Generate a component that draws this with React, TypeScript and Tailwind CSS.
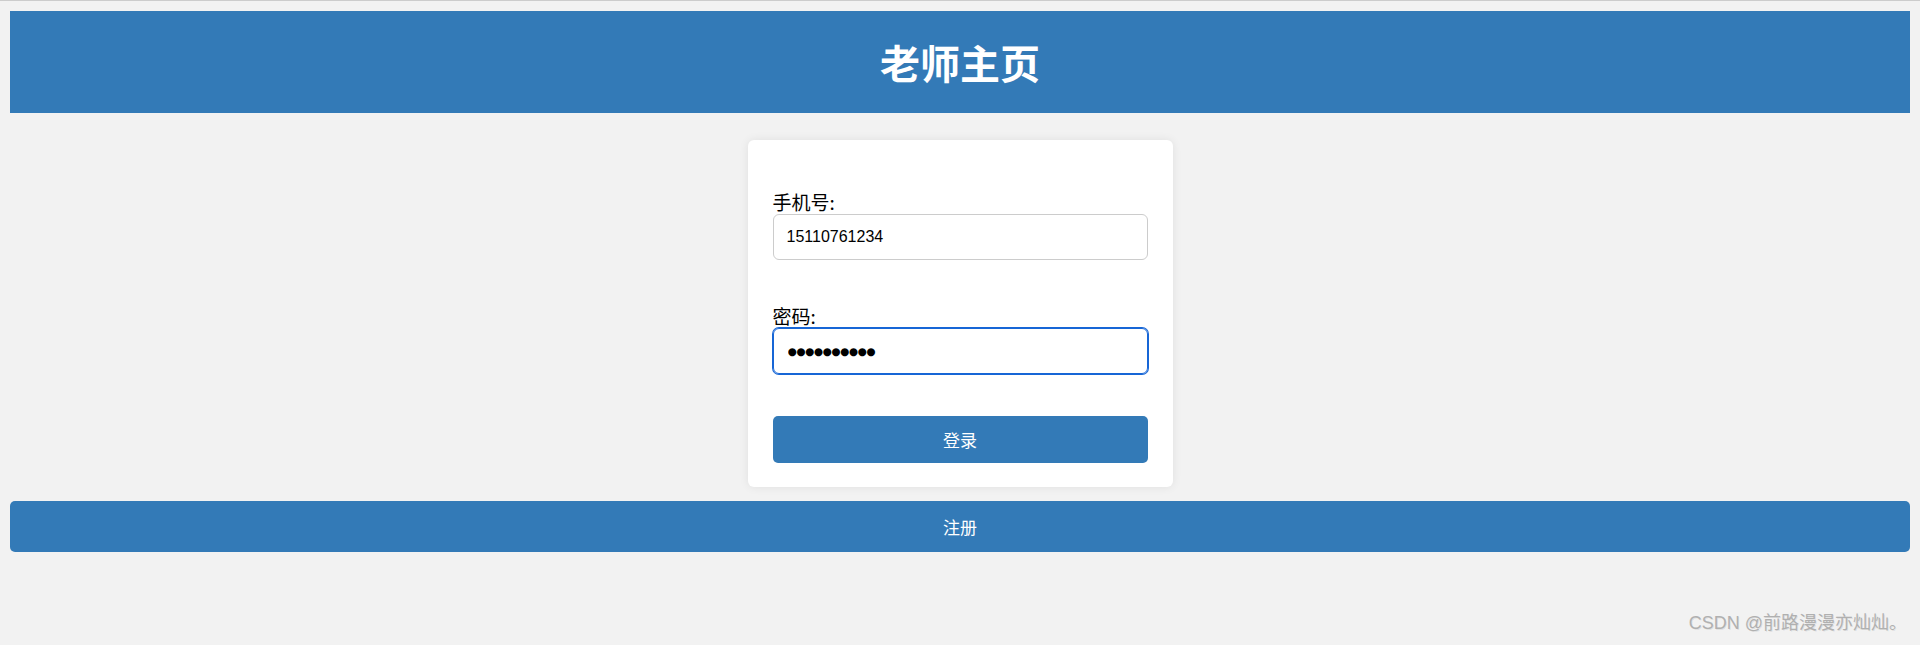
import React from 'react';

// Página de login del profesor: cabecera azul, tarjeta con formulario y botón de registro
const App: React.FC = () => {
  return (
    <div className="relative min-h-screen bg-[#f2f2f2] border-t border-[#cccccc] p-[10px] font-['Microsoft_YaHei','Noto_Sans_CJK_SC',sans-serif] text-black">
      <header className="h-[102px] bg-[#337ab7] flex items-center justify-center">
        <h1 className="text-[40px] font-bold text-white leading-none">老师主页</h1>
      </header>

      <div className="flex justify-center mt-[27px]">
        <form className="w-[425px] bg-white rounded-[6px] shadow-[0_0_10px_rgba(0,0,0,0.08)] px-[25px] pt-[50px] pb-[24px] flex flex-col">
          <label className="text-[19px] leading-[24px]">手机号:</label>
          <input
            type="text"
            readOnly
            value="15110761234"
            className="h-[46px] w-full border border-[#cccccc] rounded-[6px] px-[13px] text-[16px] font-['Liberation_Sans',sans-serif] text-black outline-none"
          />

          <label className="text-[19px] leading-[24px] mt-[44px]">密码:</label>
          {/* Campo enfocado con puntos grandes como en Windows */}
          <input
            type="text"
            readOnly
            value="●●●●●●●●●●"
            className="h-[46px] w-full border border-[#1766d6] ring-1 ring-[#1766d6] rounded-[6px] px-[14px] text-[10.5px] tracking-[-0.4px] font-['DejaVu_Sans',sans-serif] text-black outline-none"
          />

          <button
            type="button"
            className="mt-[42px] h-[47px] w-full bg-[#337ab7] text-white rounded-[5px] text-[17px]"
          >
            登录
          </button>
        </form>
      </div>

      <button
        type="button"
        className="mt-[14px] h-[51px] w-full bg-[#337ab7] text-white rounded-[5px] text-[17px]"
      >
        注册
      </button>

      {/* Marca de agua */}
      <div className="absolute right-[13px] bottom-[8px] text-[18px] font-normal text-[#b0b0b0] font-['Liberation_Sans','Noto_Sans_CJK_SC',sans-serif] [text-shadow:1px_1px_0_rgba(0,0,0,0.08)]">
        CSDN @前路漫漫亦灿灿。
      </div>
    </div>
  );
};

export default App;
